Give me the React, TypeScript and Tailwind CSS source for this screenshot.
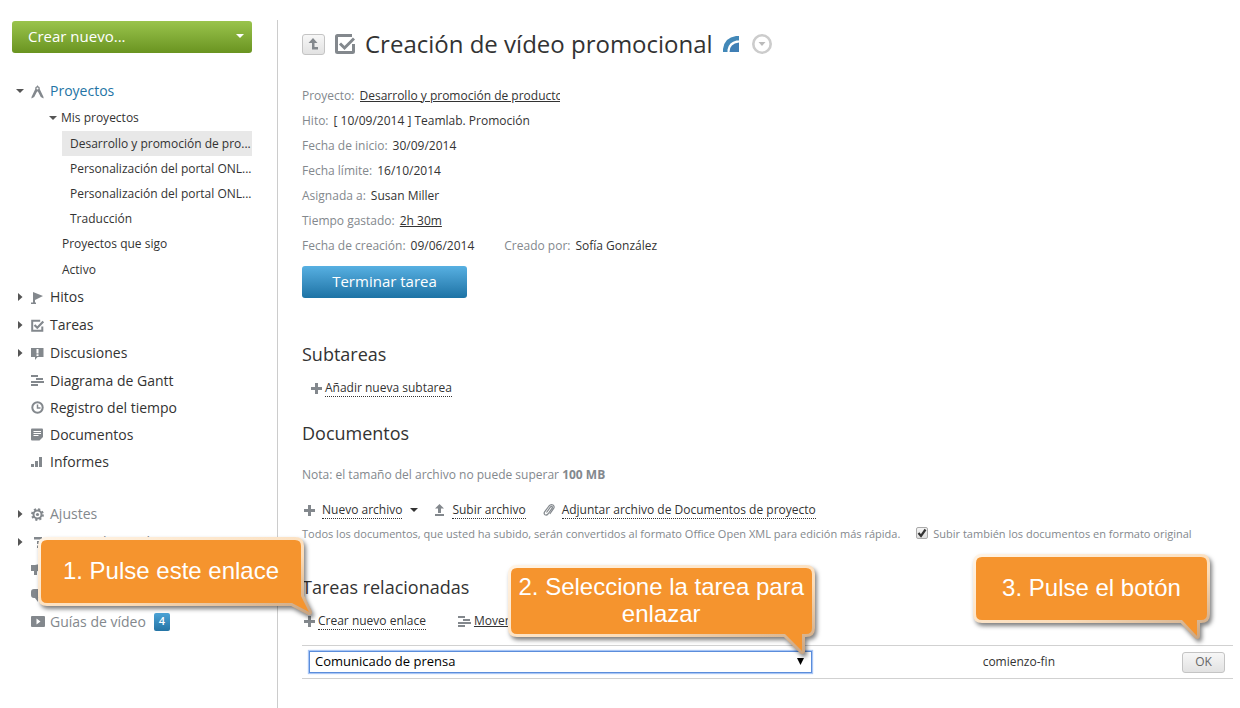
import type { ReactNode } from "react";

type IconName =
  | "projects"
  | "flag"
  | "task"
  | "discussion"
  | "gantt"
  | "clock"
  | "doc"
  | "chart"
  | "gear"
  | "help"
  | "support"
  | "forum"
  | "video";

const icons: Record<IconName, ReactNode> = {
  projects: (
    <path d="M6.5 0l.6 1.2C8.6 1.6 9 2.8 8.7 4L12.5 12v1.500L9.800 12 6.900 6.500H6.100L3.200 12 .500 13.500V12L4.300 4C4 2.800 4.400 1.600 5.900 1.200zM6.500 2.500a1 1 0 100 2 1 1 0 000-2z" fillRule="evenodd" />
  ),
  flag: <path d="M2 1l10 4-8 4v2.500h1V13H0v-1.500h2z" />,
  task: (
    <>
      <path d="M11.300 7.500v4.300H1.200V1.800h8" fill="none" stroke="currentColor" strokeWidth="2" />
      <path d="M3.500 6l2.800 2.800L12.300 2.500" fill="none" stroke="currentColor" strokeWidth="2.200" />
    </>
  ),
  discussion: (
    <path d="M0 1h12.500V10H6.500L4 13V10H0zM5.500 2v4.500h2V2zM5.500 7.300V9h2V7.300z" fillRule="evenodd" />
  ),
  gantt: <path d="M0 1h7v2H0zM5 4h7v2H5zM0 7h13v2H0zM0 10h7v2H0z" />,
  clock: (
    <>
      <circle cx="6.500" cy="6.500" r="5.200" fill="none" stroke="currentColor" strokeWidth="2" />
      <path d="M6.500 3.500v3.500h3" fill="none" stroke="currentColor" strokeWidth="1.500" />
    </>
  ),
  doc: (
    <>
      <path d="M1 .500h10q1 0 1 1V9l-3.500 3.500H1q-1 0-1-1v-10q0-1 1-1z" />
      <path d="M2.500 3.500h7.500M2.500 5.500h7.500M2.500 7.500h5" stroke="white" />
    </>
  ),
  chart: <path d="M0 9h3v3H0zM4 6h3v6H4zM8 2h3v10H8z" />,
  gear: (
    <>
      <circle cx="6.500" cy="6.500" r="5.200" fill="none" stroke="currentColor" strokeWidth="2.400" strokeDasharray="2.040 2.040" />
      <circle cx="6.500" cy="6.500" r="4" fill="none" stroke="currentColor" strokeWidth="2" />
      <circle cx="6.500" cy="6.500" r="1.600" />
    </>
  ),
  help: <path d="M3 1h8v2.500H3zM6 5h2.500v3H6zM6 9.500h2.500V12H6z" />,
  support: <path d="M0 2h4l9-2v10L6 8v4H3V8H0z" />,
  forum: <path d="M3 0h7q3 0 3 3v3q0 3-3 3H7v4L4 9H3Q0 9 0 6V3q0-3 3-3z" />,
  video: <path d="M1 1h12q1 0 1 1v9q0 1-1 1H1q-1 0-1-1V2q0-1 1-1zM5.500 3.500v6l4-3z" fillRule="evenodd" />,
};

const Icon = ({ name }: { name: IconName }) => (
  <svg className="w-[13px] h-[13px] shrink-0 overflow-visible text-[#83888d]" viewBox="0 0 13 13" fill="currentColor" aria-hidden="true">
    {icons[name]}
  </svg>
);

const CaretRight = () => (
  <svg className="w-[6px] h-[8px]" viewBox="0 0 6 8" fill="#555" aria-hidden="true">
    <path d="M1 0l4.500 4L1 8z" />
  </svg>
);

const CaretDown = ({ color = "#555" }: { color?: string }) => (
  <svg className="w-[8px] h-[4px] shrink-0" viewBox="0 0 8 4" fill={color} aria-hidden="true">
    <path d="M0 0h8L4 4z" />
  </svg>
);

const Plus = () => (
  <svg className="w-[11px] h-[11px] shrink-0" viewBox="0 0 11 11" fill="#83888d" aria-hidden="true">
    <path d="M4 0h3v4h4v3H7v4H4V7H0V4h4z" />
  </svg>
);

const UpArrow = () => (
  <svg className="w-[11px] h-[12px] shrink-0" viewBox="0 0 11 12" fill="#83888d" aria-hidden="true">
    <path d="M5.500 0L10 4.500H7V9H4V4.500H1zM1 10h9v2H1z" />
  </svg>
);

const Clip = () => (
  <svg className="w-[12px] h-[12px] shrink-0" viewBox="0 0 12 12" fill="none" stroke="#83888d" strokeWidth="1.200" aria-hidden="true">
    <path d="M3.500 8.500L7.500 3q1-1 1.700-.300.500.700-.200 1.700L5 10q-1.300 1.600-3 .800-1.500-1.200-.400-2.900L6 2q1.700-2 4-1 2 1.500.500 3.700L6.800 10" />
  </svg>
);

interface NavItem {
  label: string;
  icon: IconName;
  caret?: boolean;
}

const mainNav: NavItem[] = [
  { label: "Hitos", icon: "flag", caret: true },
  { label: "Tareas", icon: "task", caret: true },
  { label: "Discusiones", icon: "discussion", caret: true },
];

const toolNav: NavItem[] = [
  { label: "Diagrama de Gantt", icon: "gantt" },
  { label: "Registro del tiempo", icon: "clock" },
  { label: "Documentos", icon: "doc" },
  { label: "Informes", icon: "chart" },
];

const myProjects = [
  "Desarrollo y promoción de pro...",
  "Personalización del portal ONL...",
  "Personalización del portal ONL...",
  "Traducción",
];

const NavRow = ({ item, className }: { item: NavItem; className: string }) => (
  <a href="#" className={`flex items-center pl-[5px] text-sm whitespace-nowrap ${className}`}>
    <span className="w-[14px]">{item.caret && <CaretRight />}</span>
    <Icon name={item.icon} />
    <span className="ml-1.5">{item.label}</span>
  </a>
);

const Sidebar = () => (
  <aside className="w-[240px] shrink-0 ml-3 pt-[21px]">
    <button className="w-full h-8 px-4 pb-0.5 flex items-center justify-between rounded-[3px] bg-linear-to-b from-[#9ac44c] to-[#6a9420] text-white text-[15px]">
      Crear nuevo...
      <span className="-mr-2 flex">
        <CaretDown color="#fff" />
      </span>
    </button>
    <nav className="mt-6 text-[#333]">
      <a href="#" className="h-7 flex items-center pl-[4px] text-sm text-[#2474a5]">
        <span className="w-[15px]">
          <CaretDown />
        </span>
        <Icon name="projects" />
        <span className="ml-1.5">Proyectos</span>
      </a>
      <a href="#" className="h-[26px] flex items-center gap-1 pl-[37px] text-xs">
        <CaretDown />
        Mis proyectos
      </a>
      <div className="ml-[50px] text-xs whitespace-nowrap">
        {myProjects.map((name, i) => (
          <a key={i} href="#" className={`h-[25px] flex items-center pl-2 ${i === 0 ? "bg-[#e8e8e8]" : ""}`}>
            {name}
          </a>
        ))}
        <a href="#" className="h-[25px] flex items-center">Proyectos que sigo</a>
        <a href="#" className="h-[27px] flex items-center">Activo</a>
      </div>
      {mainNav.map((item) => (
        <NavRow key={item.label} item={item} className="h-7" />
      ))}
      {toolNav.map((item) => (
        <NavRow key={item.label} item={item} className="h-[27px]" />
      ))}
    </nav>
    <nav className="mt-[25px] text-[#83888d]">
      <NavRow item={{ label: "Ajustes", icon: "gear", caret: true }} className="h-7" />
      <NavRow item={{ label: "Centro de ayuda", icon: "help", caret: true }} className="h-7" />
      <NavRow item={{ label: "", icon: "support" }} className="h-[27px]" />
      <NavRow item={{ label: "", icon: "forum" }} className="h-[25px]" />
      <div className="flex items-center">
        <NavRow item={{ label: "Guías de vídeo", icon: "video" }} className="h-[27px]" />
        <span className="ml-2 w-4 h-[18px] flex items-center justify-center rounded-[2px] bg-linear-to-b from-[#4ba3d6] to-[#2474a5] text-white text-[11px] font-semibold">
          4
        </span>
      </div>
    </nav>
  </aside>
);

interface CalloutProps {
  id: string;
  className: string;
  shape: string;
  children: ReactNode;
}

// Orange hint bubble, the shape carries its own tail
const Callout = ({ id, className, shape, children }: CalloutProps) => (
  <div className={`absolute z-10 flex justify-center text-center font-['Liberation_Sans',sans-serif] text-2xl leading-[27px] text-white ${className}`}>
    <svg className="absolute left-0 top-0 w-full h-full overflow-visible drop-shadow-[2px_3px_2px_rgba(0,0,0,0.5)]" aria-hidden="true">
      <defs>
        <linearGradient id={id} x1="0" y1="0" x2="1" y2="1">
          <stop offset="0" stopColor="#fff3e4" />
          <stop offset="0.6" stopColor="#fbdcb8" />
          <stop offset="1" stopColor="#c9a582" />
        </linearGradient>
      </defs>
      <path d={shape} fill="#f5942e" stroke={`url(#${id})`} strokeWidth="6" strokeLinejoin="round" />
      <path d={shape} fill="#f5942e" />
    </svg>
    <span className="relative">{children}</span>
  </div>
);

const Field = ({ label, children }: { label: string; children: ReactNode }) => (
  <div className="h-[25px] flex items-center gap-[5px]">
    <dt className="text-[#83888d]">{label}</dt>
    <dd>{children}</dd>
  </div>
);

const ActionLink = ({ children }: { children: ReactNode }) => (
  <a href="#" className="border-b border-dotted border-[#333] whitespace-nowrap leading-[17px]">
    {children}
  </a>
);

const TaskHeader = () => (
  <header className="h-12 flex items-center">
    <button aria-label="Subir un nivel" className="w-[23px] h-[21px] flex items-center justify-center rounded-[3px] border border-[#c4c4c4] bg-linear-to-b from-[#f7f7f7] to-[#e2e2e2]">
      <svg className="w-[11px] h-[12px]" viewBox="0 0 11 12" fill="#83888d" aria-hidden="true">
        <path d="M5 0l4.500 5H6.500v4H10v2.500H4V5H.500z" />
      </svg>
    </button>
    <svg className="ml-2.5 w-5 h-5" viewBox="0 0 20 20" fill="none" stroke="#83888d" aria-hidden="true">
      <path d="M18.500 10v7.500q0 1-1 1h-15q-1 0-1-1v-15q0-1 1-1H17" strokeWidth="3" />
      <path d="M5 9.500l4.500 4.500L19 4.500" strokeWidth="3" />
    </svg>
    <h1 className="ml-2.5 text-2xl">Creación de vídeo promocional</h1>
    <svg className="ml-2.5 w-4 h-4" viewBox="0 0 16 16" aria-hidden="true">
      <path d="M0 16V13Q1.500 1.500 13 0h3v4.500h-2.500Q6 6 4.500 13.500V16z" fill="#4288b8" />
      <path d="M6.500 16q0-8.500 9.500-9.500V16z" fill="#3f7fb5" />
    </svg>
    <button aria-label="Acciones" className="ml-[13px]">
      <svg className="w-5 h-5" viewBox="0 0 20 20" aria-hidden="true">
        <circle cx="10" cy="10" r="8.700" fill="none" stroke="#ccc" strokeWidth="2.600" />
        <path d="M6.500 8h7L10 12z" fill="#bbb" />
      </svg>
    </button>
  </header>
);

const TaskInfo = () => (
  <section>
    <dl className="mt-[15px] text-xs">
      <Field label="Proyecto:">
        <a href="#" className="block w-[200px] overflow-hidden whitespace-nowrap underline">
          Desarrollo y promoción de productos
        </a>
      </Field>
      <Field label="Hito:">[ 10/09/2014 ] Teamlab. Promoción</Field>
      <Field label="Fecha de inicio:">30/09/2014</Field>
      <Field label="Fecha límite:">16/10/2014</Field>
      <Field label="Asignada a:">Susan Miller</Field>
      <Field label="Tiempo gastado:">
        <a href="#" className="underline">2h 30m</a>
      </Field>
      <div className="flex gap-[30px]">
        <Field label="Fecha de creación:">09/06/2014</Field>
        <Field label="Creado por:">Sofía González</Field>
      </div>
    </dl>
    <button className="mt-2 h-8 w-[165px] pb-0.5 rounded-[3px] bg-linear-to-b from-[#57b0e2] to-[#1c73a5] text-white text-[15px]">
      Terminar tarea
    </button>
  </section>
);

const Documents = () => (
  <section className="mt-[21px]">
    <h2 className="text-lg leading-6">Documentos</h2>
    <p className="mt-5 text-xs leading-5 text-[#83888d]">
      Nota: el tamaño del archivo no puede superar <strong>100 MB</strong>
    </p>
    <div className="mt-[13px] h-6 flex items-center text-xs">
      <span className="ml-0.5 mr-[7px]">
        <Plus />
      </span>
      <ActionLink>Nuevo archivo</ActionLink>
      <span className="ml-2 mr-4">
        <CaretDown color="#333" />
      </span>
      <UpArrow />
      <span className="ml-[7px] mr-[17px] flex">
        <ActionLink>Subir archivo</ActionLink>
      </span>
      <Clip />
      <span className="ml-[7px] flex">
        <ActionLink>Adjuntar archivo de Documentos de proyecto</ActionLink>
      </span>
    </div>
    <div className="mt-0.5 h-5 flex items-center gap-4 text-[11px] whitespace-nowrap text-[#83888d]">
      <span>Todos los documentos, que usted ha subido, serán convertidos al formato Office Open XML para edición más rápida.</span>
      <label className="flex items-center gap-[5px]">
        <span className="relative flex pb-0.5">
          <input type="checkbox" defaultChecked className="peer w-[12px] h-[12px] appearance-none rounded-[2px] border border-[#aaa] bg-linear-to-b from-[#f4f4f4] to-[#dedede]" />
          <svg className="absolute inset-0 w-[12px] h-[12px] hidden peer-checked:block pointer-events-none" viewBox="0 0 12 12" fill="none" stroke="#333" strokeWidth="2.200" aria-hidden="true">
            <path d="M2.500 6l2.500 3 4.500-6.500" />
          </svg>
        </span>
        Subir también los documentos en formato original
      </label>
    </div>
  </section>
);

const RelatedTasks = () => (
  <section className="relative mt-[31px]">
    <h2 className="text-lg leading-6">Tareas relacionadas</h2>
    <div className="mt-2.5 h-6 flex items-center text-xs">
      <span className="ml-0.5 mr-[3px]">
        <Plus />
      </span>
      <ActionLink>Crear nuevo enlace</ActionLink>
      <span className="ml-8 mr-[3px]">
        <Icon name="gantt" />
      </span>
      <a href="#" className="underline">Mover</a>
    </div>
    <div className="mt-3 h-[34px] flex items-center border-y border-[#d1d1d1] text-xs">
      <div className="relative ml-[7px] w-[54%] flex">
        <select
          aria-label="Tarea para enlazar"
          className="w-full h-[22px] appearance-none border border-[#5b8ddb] bg-white pl-[5px] text-[13px] text-black shadow-[0_0_1px_1px_#a9c6f5] outline-none"
        >
          <option>Comunicado de prensa</option>
        </select>
        <svg className="absolute right-2 top-[7px] w-[7px] h-[7px] pointer-events-none" viewBox="0 0 7 7" aria-hidden="true">
          <path d="M0 0h7L3.500 7z" />
        </svg>
        <Callout
          id="edge-select"
          className="right-0 top-[-83px] w-[301px] h-[66px] pt-[5px]"
          shape="M6 0H295Q301 0 301 6V60Q301 66 295 66H291V83L274 66H6Q0 66 0 60V6Q0 0 6 0Z"
        >
          2. Seleccione la tarea para
          <br />
          enlazar
        </Callout>
      </div>
      <span className="ml-auto mr-[127px]">comienzo-fin</span>
      <button className="mr-2 w-[43px] h-[21px] rounded-[3px] border border-[#c4c4c4] bg-linear-to-b from-[#f7f7f7] to-[#e2e2e2] text-[#666]">
        OK
      </button>
    </div>
    <Callout
      id="edge-link"
      className="left-[-261px] top-[-35px] w-[260px] h-[63px] pt-[17px]"
      shape="M6 0H254Q260 0 260 6V56L268 72L251 63H6Q0 63 0 57V6Q0 0 6 0Z"
    >
      1. Pulse este enlace
    </Callout>
    <Callout
      id="edge-ok"
      className="right-[26px] top-[-18px] w-[231px] h-[63px] pt-[17px]"
      shape="M6 0H225Q231 0 231 6V57Q231 63 225 63H221V79L206 63H6Q0 63 0 57V6Q0 0 6 0Z"
    >
      3. Pulse el botón
    </Callout>
  </section>
);

const App = () => {
  return (
    <div className="min-h-screen flex bg-white text-[#333] font-['Open_Sans',sans-serif]">
      <Sidebar />
      <div className="ml-[25px] mt-5 border-l border-[#ccc]" />
      <main className="flex-1 min-w-0 ml-6 mr-[7px] pt-5">
        <TaskHeader />
        <TaskInfo />
        <section className="mt-11">
          <h2 className="text-lg leading-6">Subtareas</h2>
          <div className="mt-2.5 h-6 flex items-center gap-[3px] pl-[9px] text-xs">
            <Plus />
            <ActionLink>Añadir nueva subtarea</ActionLink>
          </div>
        </section>
        <Documents />
        <RelatedTasks />
      </main>
    </div>
  );
};

export default App;
